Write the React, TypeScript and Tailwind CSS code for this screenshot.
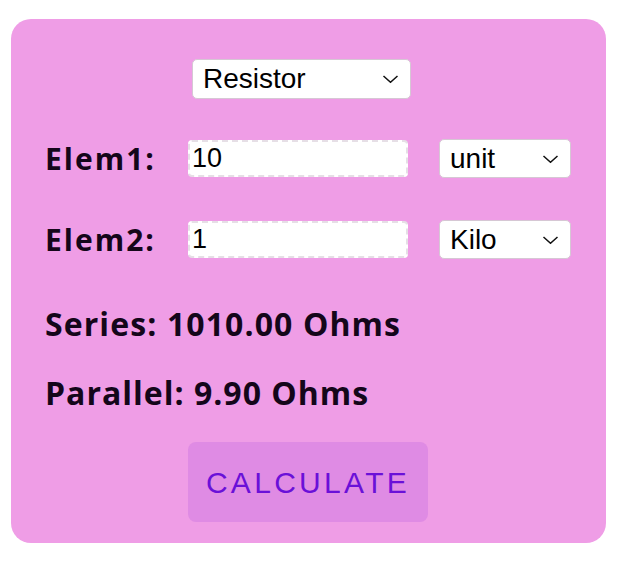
import { useState } from "react";

function Chevron() {
  return (
    <svg
      className="pointer-events-none absolute right-[12px] top-1/2 -translate-y-1/2"
      width="17"
      height="9"
      viewBox="0 0 17 9"
      fill="none"
    >
      <path d="M1.5 1.5 L8.5 7.8 L15.5 1.5" stroke="#111" strokeWidth="1.5" />
    </svg>
  );
}

function Select({ value, options, className }: { value: string; options: string[]; className: string }) {
  const [v, setV] = useState(value);
  return (
    <div className={`relative ${className}`}>
      <select
        value={v}
        onChange={(e) => setV(e.target.value)}
        className="h-full w-full appearance-none rounded-[5px] border border-[#d6c7d4] bg-white pl-[10px] text-[28px] leading-none text-black outline-none [font-family:'Liberation_Sans',Arial,sans-serif]"
      >
        {options.map((o) => (
          <option key={o}>{o}</option>
        ))}
      </select>
      <Chevron />
    </div>
  );
}

function ElemRow({ label, value, unit }: { label: string; value: string; unit: string }) {
  return (
    <div className="flex items-center">
      <span className="w-[143px] text-[30px] font-bold leading-none tracking-[2px] text-[#14061a]">{label}</span>
      <input
        defaultValue={value}
        className="h-[37px] w-[220px] rounded-[4px] border-2 border-dashed border-[#e6dfe6] bg-white pl-[2px] text-[27px] text-black outline-none [font-family:'Liberation_Sans',Arial,sans-serif]"
      />
      <Select value={unit} options={["unit", "Kilo", "Mega", "Milli", "Micro"]} className="ml-[31px] h-[39px] w-[132px]" />
    </div>
  );
}

export default function App() {
  return (
    <div className="h-[573px] w-[632px] bg-white pl-[11px] pt-[19px]">
      <div className="flex h-[524px] w-[595px] flex-col rounded-[20px] bg-[#ef9de6] pl-[34px] pt-[40px] [font-family:'Open_Sans','Noto_Sans',sans-serif]">
        <Select value="Resistor" options={["Resistor", "Capacitor", "Inductor"]} className="ml-[147px] h-[40px] w-[219px]" />
        <div className="mt-[40px] flex flex-col gap-[42px]">
          <ElemRow label="Elem1:" value="10" unit="unit" />
          <ElemRow label="Elem2:" value="1" unit="Kilo" />
        </div>
        <p className="mt-[49px] text-[32px] font-bold leading-none tracking-[1.1px] text-[#14061a]">Series: 1010.00 Ohms</p>
        <p className="mt-[37px] text-[32px] font-bold leading-none tracking-[1px] text-[#14061a]">Parallel: 9.90 Ohms</p>
        <button className="ml-[143px] mt-[33px] h-[80px] w-[240px] rounded-[8px] bg-[#df8be4] text-[30px] tracking-[3.3px] text-[#6a10d8] [font-family:'Liberation_Sans',Arial,sans-serif]">
          CALCULATE
        </button>
      </div>
    </div>
  );
}
